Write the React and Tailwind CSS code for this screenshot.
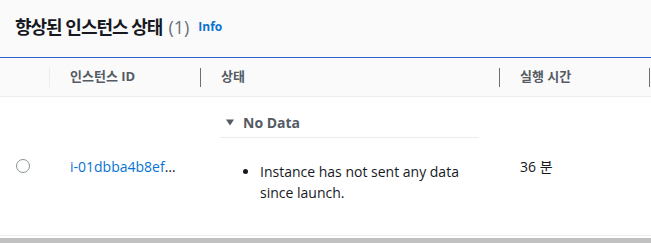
import React from 'react';

const font = { fontFamily: '"Open Sans", "Noto Sans CJK KR", sans-serif' };

function Divider({ light }) {
  return <div className={`w-px h-[19px] shrink-0 ${light ? 'bg-[#eaeded]' : 'bg-[#687078]'}`} />;
}

function HeadCell({ children, light }) {
  return (
    <div className="flex items-center min-w-0">
      <Divider light={light} />
      <span className="ml-5 text-[13px] font-bold text-[#545b64] whitespace-nowrap">{children}</span>
    </div>
  );
}

export default function App() {
  const rows = [
    { id: 'i-01dbba4b8ef', status: 'No Data', detail: 'Instance has not sent any data since launch.', uptime: '36 분' },
  ];

  return (
    <div className="w-[651px] h-[243px] bg-white overflow-hidden text-[#16191f]" style={font}>
      {/* header */}
      <div className="h-[57px] bg-[#fafafa] flex items-center pl-[15px] pb-[3px]">
        <h2 className="flex items-center text-[18px] font-bold leading-6 text-[#16191f]">
          <span className="tracking-[-1px]">향상된 인스턴스 상태</span>
          <span className="ml-[6px] font-normal text-[#687078]">(1)</span>
        </h2>
        <a className="ml-[9px] text-[12px] font-bold text-[#0972d3]">Info</a>
      </div>
      <div className="h-px bg-[#2f62d0]" />

      {/* column headers */}
      <div className="grid grid-cols-[49px_151px_299px_150px_1fr] h-[39px] bg-[#fafafa] border-b border-[#eaeded]">
        <div />
        <HeadCell light>인스턴스 ID</HeadCell>
        <HeadCell>상태</HeadCell>
        <HeadCell>실행 시간</HeadCell>
        <div className="flex items-center"><Divider /></div>
      </div>

      {rows.map(r => (
        <div key={r.id} className="grid grid-cols-[49px_151px_299px_150px_1fr] border-b border-[#eaeded]">
          <div className="flex items-center pl-4">
            <span className="w-[14px] h-[14px] rounded-full border border-[#879596] bg-white" />
          </div>
          <div className="flex items-center pl-[21px] text-[14px] whitespace-nowrap">
            <a className="text-[#0972d3]">{r.id}</a>
            <span className="text-[#16191f]">…</span>
          </div>
          <div className="px-5 pt-[15px] pb-[32px]">
            <div className="flex items-center h-5 pl-[6px] gap-[9px]">
              <svg width="8" height="7" viewBox="0 0 8 7">
                <path d="M0 0.5 L8 0.5 L4 6.5 Z" fill="#545b64" />
              </svg>
              <span className="text-[14px] font-bold text-[#545b64]">{r.status}</span>
            </div>
            <div className="mt-[5px] border-t border-[#eaeded]" />
            <ul className="list-disc pl-10 mt-[23px] text-[14px] leading-[21px]">
              <li>{r.detail}</li>
            </ul>
          </div>
          <div className="flex items-center pl-[21px] text-[14px]">{r.uptime}</div>
          <div />
        </div>
      ))}

      <div className="mt-[2px] h-[5px] bg-[#c1c1c1]" />
    </div>
  );
}
